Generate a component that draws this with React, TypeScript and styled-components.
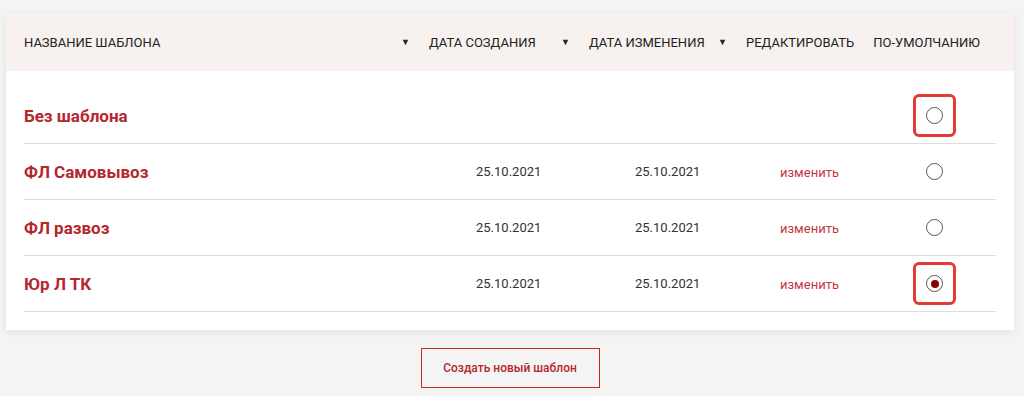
import styled, { createGlobalStyle } from 'styled-components'

const GlobalStyle = createGlobalStyle`
	body {
		margin: 0;
		background: #f4f4f4;
		font-family: Roboto, "Liberation Sans", Arial, sans-serif;
	}
`

type Template = {
	name: string
	created?: string
	changed?: string
	editable: boolean
	selected: boolean
	highlight: boolean
}

const templates: Template[] = [
	{ name: 'Без шаблона', editable: false, selected: false, highlight: true },
	{ name: 'ФЛ Самовывоз', created: '25.10.2021', changed: '25.10.2021', editable: true, selected: false, highlight: false },
	{ name: 'ФЛ развоз', created: '25.10.2021', changed: '25.10.2021', editable: true, selected: false, highlight: false },
	{ name: 'Юр Л ТК', created: '25.10.2021', changed: '25.10.2021', editable: true, selected: true, highlight: true },
]

export default function App() {
	return (
		<Page>
			<GlobalStyle />
			<Card>
				<Header>
					<HeadCell $grow>
						<span>Название шаблона</span>
						<Arrow>▼</Arrow>
					</HeadCell>
					<HeadCell $width={141}>
						<span>Дата создания</span>
						<Arrow>▼</Arrow>
					</HeadCell>
					<HeadCell $width={138}>
						<span>Дата изменения</span>
						<Arrow>▼</Arrow>
					</HeadCell>
					<HeadCell>Редактировать</HeadCell>
					<HeadCell>По-умолчанию</HeadCell>
				</Header>
				<Body>
					{templates.map((t) => (
						<Row key={t.name}>
							<Name>{t.name}</Name>
							<DateCell>{t.created}</DateCell>
							<DateCell>{t.changed}</DateCell>
							<div>{t.editable && <EditLink href="#">изменить</EditLink>}</div>
							<RadioCell>
								<RadioWrap $highlight={t.highlight}>
									<Radio $checked={t.selected} />
								</RadioWrap>
							</RadioCell>
						</Row>
					))}
				</Body>
			</Card>
			<Footer>
				<CreateButton>Создать новый шаблон</CreateButton>
			</Footer>
		</Page>
	)
}

const Page = styled.div`
	padding: 13px 10px 0 6px;
`

const Card = styled.div`
	background: #fff;
	box-shadow: 0 2px 8px rgba(0, 0, 0, 0.08);
`

const Header = styled.div`
	height: 58px;
	background: #f7f2ef;
	display: flex;
	align-items: center;
	gap: 19px;
	padding: 0 34px 0 18px;
	font-size: 13px;
	color: #222;
	text-transform: uppercase;
`

const HeadCell = styled.div<{ $grow?: boolean; $width?: number }>`
	display: flex;
	align-items: center;
	justify-content: space-between;
	flex: ${(p) => (p.$grow ? '1' : 'none')};
	width: ${(p) => (p.$width ? `${p.$width}px` : 'auto')};
	white-space: nowrap;
`

const Arrow = styled.span`
	font-size: 9px;
	color: #222;
`

const Body = styled.div`
	padding: 17px 18px 18px 18px;
`

const Row = styled.div`
	height: 56px;
	box-sizing: border-box;
	border-bottom: 1px solid #dedede;
	display: grid;
	grid-template-columns: 452px 159px 145px 146px 1fr;
	align-items: center;
`

const Name = styled.div`
	font-size: 17px;
	font-weight: 700;
	color: #b3272d;
`

const DateCell = styled.div`
	font-size: 13px;
	color: #333;
`

const EditLink = styled.a`
	font-size: 13px;
	color: #c0393f;
	text-decoration: none;
`

const RadioCell = styled.div`
	display: flex;
`

const RadioWrap = styled.div<{ $highlight: boolean }>`
	position: relative;
	width: 17px;
	height: 17px;
	&::after {
		content: '';
		display: ${(p) => (p.$highlight ? 'block' : 'none')};
		position: absolute;
		left: -13px;
		top: -13px;
		width: 37px;
		height: 37px;
		border: 3px solid #e53935;
		border-radius: 6px;
	}
`

const Radio = styled.div<{ $checked: boolean }>`
	width: 17px;
	height: 17px;
	box-sizing: border-box;
	border-radius: 50%;
	border: 1.5px solid #555;
	display: flex;
	align-items: center;
	justify-content: center;
	&::before {
		content: '';
		display: ${(p) => (p.$checked ? 'block' : 'none')};
		width: 8px;
		height: 8px;
		border-radius: 50%;
		background: #8b0000;
	}
`

const Footer = styled.div`
	display: flex;
	justify-content: center;
	padding-top: 18px;
`

const CreateButton = styled.button`
	width: 179px;
	height: 40px;
	background: transparent;
	border: 1px solid #c62828;
	color: #b3272d;
	font-family: Roboto, "Liberation Sans", Arial, sans-serif;
	font-size: 12px;
	font-weight: 500;
	cursor: pointer;
`
